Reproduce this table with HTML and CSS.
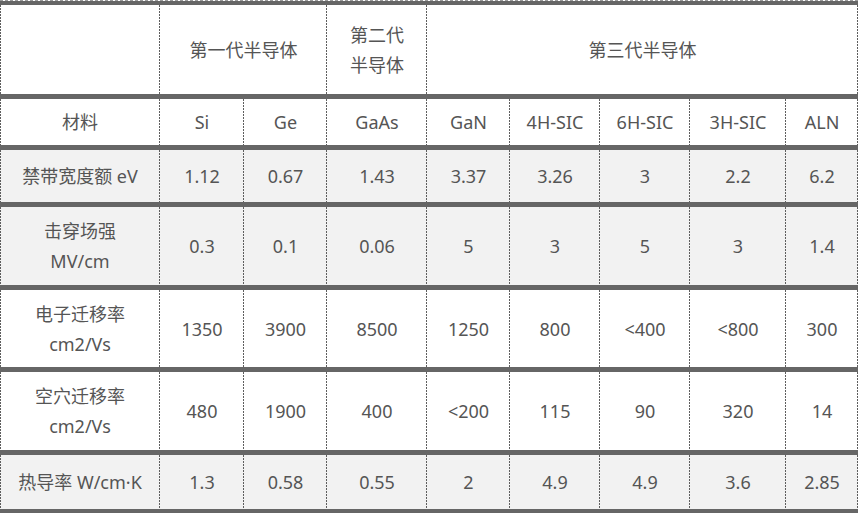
FILE: index.html
```html
<!DOCTYPE html>
<html lang="zh-CN">
<head>
<meta charset="utf-8">
<title>半导体材料对比</title>
<link rel="stylesheet" href="styles.css">
</head>
<body>
<div class="wrap">
<table class="tbl">
<colgroup>
<col class="c1"><col class="c2"><col class="c3"><col class="c4"><col class="c5"><col class="c6"><col class="c7"><col class="c8"><col class="c9">
</colgroup>
<tr class="head">
<td></td>
<td colspan="2">第一代半导体</td>
<td>第二代<br>半导体</td>
<td colspan="5">第三代半导体</td>
</tr>
<tr class="r-mat">
<td>材料</td><td>Si</td><td>Ge</td><td>GaAs</td><td>GaN</td><td>4H-SIC</td><td>6H-SIC</td><td>3H-SIC</td><td>ALN</td>
</tr>
<tr class="r-gap grey">
<td>禁带宽度额 eV</td><td>1.12</td><td>0.67</td><td>1.43</td><td>3.37</td><td>3.26</td><td>3</td><td>2.2</td><td>6.2</td>
</tr>
<tr class="r-break grey">
<td>击穿场强<br>MV/cm</td><td>0.3</td><td>0.1</td><td>0.06</td><td>5</td><td>3</td><td>5</td><td>3</td><td>1.4</td>
</tr>
<tr class="r-elec">
<td>电子迁移率<br>cm2/Vs</td><td>1350</td><td>3900</td><td>8500</td><td>1250</td><td>800</td><td>&lt;400</td><td>&lt;800</td><td>300</td>
</tr>
<tr class="r-hole">
<td>空穴迁移率<br>cm2/Vs</td><td>480</td><td>1900</td><td>400</td><td>&lt;200</td><td>115</td><td>90</td><td>320</td><td>14</td>
</tr>
<tr class="r-heat grey">
<td>热导率 W/cm·K</td><td>1.3</td><td>0.58</td><td>0.55</td><td>2</td><td>4.9</td><td>4.9</td><td>3.6</td><td>2.85</td>
</tr>
</table>
</div>
</body>
</html>
```
FILE: styles.css
```css
html, body {
  margin: 0;
  padding: 0;
  background: #ffffff;
}

.wrap {
  width: 858px;
  border-top: 1px dashed #9a9a9a;
}

.tbl {
  width: 858px;
  table-layout: fixed;
  border-collapse: separate;
  border-spacing: 0;
  font-family: "Noto Sans", "Noto Sans CJK SC", sans-serif;
  font-size: 18px;
  line-height: 30px;
  color: #555555;
}

.c1 { width: 160px; }
.c2 { width: 84px; }
.c3 { width: 83px; }
.c4 { width: 100px; }
.c5 { width: 83px; }
.c6 { width: 90px; }
.c7 { width: 90px; }
.c8 { width: 96px; }
.c9 { width: 72px; }

.tbl td {
  padding: 0 4px;
  text-align: center;
  vertical-align: middle;
  white-space: nowrap;
  border-top: 5px solid #666666;
  background-color: #ffffff;
  background-image: linear-gradient(to bottom, #5e5e5e 0, #5e5e5e 2px, transparent 2px, transparent 3px);
  background-size: 1px 3px;
  background-repeat: repeat-y;
  background-position: right top;
}

.tbl td:first-child {
  background-image:
    linear-gradient(to bottom, #5e5e5e 0, #5e5e5e 2px, transparent 2px, transparent 3px),
    linear-gradient(to bottom, #5e5e5e 0, #5e5e5e 2px, transparent 2px, transparent 3px);
  background-size: 1px 3px, 1px 3px;
  background-repeat: repeat-y, repeat-y;
  background-position: right top, left top;
}

.grey td {
  background-color: #f2f2f2;
}

.head td { border-top-width: 4px; height: 89px; }
.r-mat td { height: 46px; }
.r-gap td { height: 52px; }
.r-break td { height: 78px; }
.r-elec td { height: 77px; }
.r-hole td { height: 78px; }
.r-heat td { height: 54px; border-bottom: 4px solid #666666; }
```
